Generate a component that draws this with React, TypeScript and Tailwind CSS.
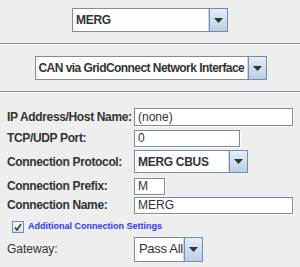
import React from "react";

const Arrow = () => (
  <div className="flex h-full w-[18px] shrink-0 items-center justify-center border-l border-[#7a8aa8] bg-gradient-to-b from-[#e6eef7] to-[#b9cfe4]">
    <svg width="9" height="5" viewBox="0 0 9 5">
      <path d="M0 0h9L4.5 5z" fill="#333" />
    </svg>
  </div>
);

const Combo = ({ value, className, textClass }: { value: string; className: string; textClass?: string }) => (
  <div className={`flex items-stretch border border-[#7a8aa8] bg-[#eeeeee] shadow-[inset_1px_1px_0_#fff] ${className}`}>
    <div className="flex min-w-0 flex-1 items-center pl-[2px]">
      <div className={`flex h-full min-w-0 flex-1 items-center overflow-hidden whitespace-nowrap border-r border-[#cdd5e2] bg-white pl-[1px] text-[#333] ${textClass ?? "text-[12px] font-bold tracking-[-0.3px]"}`}>
        {value}
      </div>
    </div>
    <Arrow />
  </div>
);

const Field = ({ value, className }: { value: string; className: string }) => (
  <div className={`flex items-center whitespace-nowrap border border-[#7a8aa8] bg-white pl-[3px] text-[12px] text-[#333] shadow-[1px_1px_0_#fff] ${className}`}>
    {value}
  </div>
);

const Sep = () => (
  <div className="w-full">
    <div className="h-px bg-[#7a8aa8]" />
    <div className="h-px bg-white" />
  </div>
);

const Row = ({ label, bold = true, children, className }: { label: string; bold?: boolean; children: React.ReactNode; className?: string }) => (
  <div className={`flex items-center ${className ?? ""}`}>
    <div className={`w-[134px] shrink-0 whitespace-nowrap pl-[7px] text-[12px] text-[#333] ${bold ? "font-bold tracking-[-0.35px]" : ""}`}>{label}</div>
    {children}
  </div>
);

export default function App() {
  return (
    <div
      className="flex h-[267px] w-[300px] flex-col overflow-hidden bg-[#eeeeee]"
      style={{ fontFamily: '"Liberation Sans", Arial, sans-serif' }}
    >
      <div className="flex justify-center pt-[8px]">
        <Combo value="MERG" className="h-[24px] w-[156px]" />
      </div>
      <div className="mt-[11px]">
        <Sep />
      </div>
      <div className="mt-[11px] flex justify-center pl-[1px]">
        <Combo
          value="CAN via GridConnect Network Interface"
          className="h-[24px] w-[232px]"
          textClass="text-[12px] font-bold tracking-[-0.55px]"
        />
      </div>
      <div className="mt-[11px]">
        <Sep />
      </div>
      <div className="mt-[15px] flex flex-col">
        <Row label="IP Address/Host Name:">
          <Field value="(none)" className="h-[18px] w-[159px]" />
        </Row>
        <Row label="TCP/UDP Port:" className="mt-[3px]">
          <Field value="0" className="h-[17px] w-[106px]" />
        </Row>
        <Row label="Connection Protocol:" className="mt-[3px]">
          <Combo value="MERG CBUS" className="h-[23px] w-[114px]" />
        </Row>
        <Row label="Connection Prefix:" className="mt-[4px]">
          <Field value="M" className="h-[17px] w-[31px]" />
        </Row>
        <Row label="Connection Name:" className="mt-[1px]">
          <Field value="MERG" className="h-[17px] w-[159px]" />
        </Row>
        <div className="mt-[6px] flex items-center pl-[12px]">
          <div className="flex h-[12px] w-[12px] items-center justify-center border border-[#7a8aa8] bg-gradient-to-b from-[#f4f7fb] to-[#d5e0ec]">
            <svg width="8" height="8" viewBox="0 0 8 8">
              <path d="M1 4.5L3 7L7 1" stroke="#333" strokeWidth="1.5" fill="none" />
            </svg>
          </div>
          <span className="ml-[4px] whitespace-nowrap text-[9px] font-bold text-[#3333ff]">Additional Connection Settings</span>
        </div>
        <Row label="Gateway:" bold={false} className="mt-[3px]">
          <Combo value="Pass All" className="h-[25px] w-[69px]" textClass="text-[13px] pl-[2px] tracking-[-0.3px]" />
        </Row>
      </div>
    </div>
  );
}
